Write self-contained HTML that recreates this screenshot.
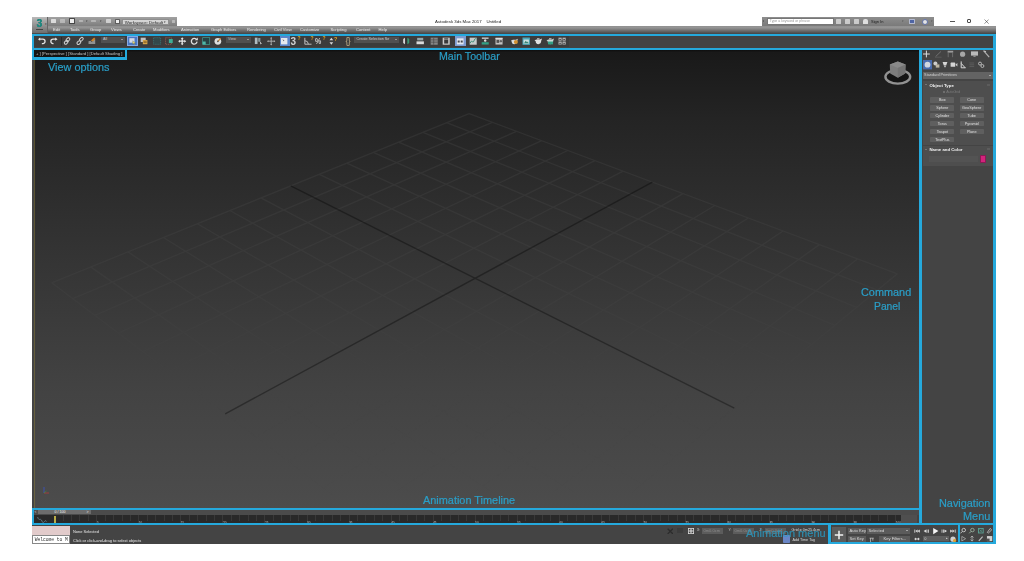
<!DOCTYPE html>
<html><head><meta charset="utf-8"><title>3ds Max 2017 interface</title>
<style>
*{box-sizing:border-box;margin:0;padding:0}
html,body{width:1024px;height:561px;background:#fff;overflow:hidden;font-family:"Liberation Sans",sans-serif}
#app{position:absolute;left:32px;top:17px;width:963.7px;height:526.5px;background:#444;overflow:hidden}
.abs{position:absolute}
/* title bar */
#title{position:absolute;left:0;top:0;width:964px;height:8.5px;background:#fff}
#qat{position:absolute;left:0;top:0;width:144.5px;height:8.5px;background:linear-gradient(#a2a2a2,#7d7d7d)}
#logo{position:absolute;left:0;top:0;width:15.5px;height:15.5px;background:linear-gradient(#b9b9b9,#6e6e6e);border-right:.5px solid #666;z-index:3}
#logo span{position:absolute;left:4.4px;top:.6px;font:bold 10.4px "Liberation Sans",sans-serif;color:#1d8f86;text-shadow:0 0 .6px #0e5a55}
#logo u{position:absolute;left:4px;top:11.6px;width:6.6px;height:1.8px;background:#333;display:block;opacity:.8}
.qi{position:absolute;top:1.6px;height:5px;background:#e9e9e9;border-radius:.6px;opacity:.85}
#ws{position:absolute;left:89.8px;top:1.5px;width:47.6px;height:6.3px;background:#d4d4d4;border:.4px solid #8e8e8e;font-size:4.4px;line-height:5.5px;color:#222;padding-left:2px;white-space:nowrap}
#ttext{position:absolute;left:403px;top:2px;font-size:4.35px;line-height:5px;color:#222;white-space:pre}
#search{position:absolute;left:729.8px;top:.4px;width:172.6px;height:8.4px;background:linear-gradient(#8d8d8d,#7a7a7a)}
#sbox{position:absolute;left:4.9px;top:1px;width:67.8px;height:6.2px;background:#fff;border:.4px solid #777;font-size:3.5px;line-height:5.6px;color:#999;padding-left:2px;white-space:nowrap}
#signin{position:absolute;left:109.2px;top:1.3px;font-size:4px;line-height:5.4px;color:#1c1c1c;white-space:nowrap}
.wc{position:absolute;top:0;font-size:7px;line-height:8.5px;color:#111}
/* menu bar */
#menu{position:absolute;left:0;top:8.8px;width:964px;height:8.2px;background:linear-gradient(#848484 0,#9a9a9a 10%,#8c8c8c 30%,#6c6c6c 60%,#4a4a4a 92%)}
#menu span{position:absolute;top:1.5px;font-size:4.1px;line-height:5px;color:#ececec;white-space:nowrap}
/* toolbar */
#tb{position:absolute;left:0;top:16.5px;width:964px;height:16.5px;background:#434343}
#tbin{position:absolute;left:2px;top:2.6px;width:535px;height:11.4px;background:#3c3c3c}
.ic{position:absolute;top:20.2px;width:8.4px;height:8.4px;margin-left:.8px;overflow:visible;opacity:.92}
.dd{position:absolute;top:20.1px;height:5.8px;background:#505050;font-size:3.7px;line-height:5.9px;overflow:hidden;color:#cfcfcf;padding-left:2.5px;white-space:nowrap}
.dd:after{content:"";position:absolute;right:2px;top:2.1px;border:1.1px solid transparent;border-top:1.5px solid #ddd}
#title,#menu,#icons,#cp,#st,#tl,#vlab,#logo{filter:blur(.32px)}
/* annotation boxes */
.cl{position:absolute;background:#25a9dc;z-index:20;display:block}
.lab{position:absolute;color:#2a9fc8;-webkit-text-stroke:.2px #2a9fc8;white-space:nowrap;z-index:21;font-family:"Liberation Sans",sans-serif;transform-origin:0 0}
/* viewport */
#vp{position:absolute;left:2px;top:33px;width:885px;height:458px;background:linear-gradient(#0e0e0e 0,#191919 .5%,#242424 15%,#343434 45%,#434343 75%,#4c4c4c 100%);overflow:hidden}
#vp svg{position:absolute;left:0;top:0}
#vlab{position:absolute;left:2px;top:33px;width:93px;height:8px;background:#131313;font-size:4.15px;line-height:8.6px;color:#c4c4c4;padding-left:2px;white-space:pre;z-index:5}
/* command panel */
#cp{position:absolute;left:889px;top:33px;width:75px;height:458px;background:#444}
#cp .roll{position:absolute;left:1.5px;width:70px;background:#4e4e4e}
#cp .hd{position:absolute;left:8.5px;font:bold 4.3px "Liberation Sans",sans-serif;color:#f2f2f2;white-space:nowrap;line-height:5px}
#cp .bt{position:absolute;width:24.2px;height:5.7px;overflow:hidden;background:#5f5f5f;font-size:3.75px;line-height:6.9px;color:#e2e2e2;text-align:center;border-radius:.4px}
/* timeline */
#tl{position:absolute;left:2px;top:493.3px;width:885px;height:12.5px;background:#444}
#tslider{position:absolute;left:0;top:0;width:885px;height:4.4px;background:#4b4b4b}
#tthumb{position:absolute;left:3.8px;top:.2px;width:53.2px;height:4px;background:#6c6c6c;font-size:3.6px;line-height:4px;color:#f4f4f4;padding-left:16.6px;white-space:nowrap}
#track{position:absolute;left:0;top:4.6px;width:866.8px;height:8.4px;background:#292929}
#track i{position:absolute;top:.4px;width:.5px;background:#383838;display:block}
#track b{position:absolute;top:6.9px;font:normal 3px "Liberation Sans",sans-serif;color:#c8c8c8;line-height:3.5px;z-index:25}
/* status */
#st{position:absolute;left:0;top:508px;width:964px;height:18.5px;background:#444}
.stx{position:absolute;font-size:3.95px;line-height:5px;color:#e8e8e8;white-space:nowrap}
.sb{position:absolute;background:#5b5b5b;font-size:4.05px;line-height:6.4px;overflow:hidden;color:#ddd;white-space:nowrap;padding-left:1.1px;height:5.8px}
</style></head><body>
<div id="app">
  <!-- title bar -->
  <div id="title">
    <div id="qat">
      <i class="qi" style="left:19.4px;width:4.8px;top:2px;height:4.4px"></i><i class="qi" style="left:28px;width:4.6px;top:2px;height:4.4px;opacity:.45"></i><i class="qi" style="left:37.4px;width:5.4px;top:1.4px;height:5.6px;background:#fff;border:.9px solid #3a3a3a"></i><i class="qi" style="left:46.8px;width:4.6px;opacity:.4;height:2.4px;top:3px"></i><i class="qi" style="left:59.4px;width:4.6px;opacity:.4;height:2.4px;top:3px"></i><i class="qi" style="left:74px;width:4.6px;top:2px;height:4.4px;opacity:.7"></i><i class="qi" style="left:82.6px;width:5px;top:1.8px;height:5px;background:#fff;border:.5px solid #555"></i>
      <span class="abs" style="left:53.6px;top:2.6px;font-size:2.6px;line-height:4px;color:#444">▾</span><span class="abs" style="left:67.6px;top:2.6px;font-size:2.6px;line-height:4px;color:#444">▾</span>
      <div id="ws">Workspace: Default<span style="position:absolute;right:2px;top:0;font-size:3px;color:#333">▾</span></div>
      <i class="qi" style="left:140.4px;width:2.6px;opacity:.45;height:2.6px;top:3px"></i>
    </div>
    <div id="ttext">Autodesk 3ds Max 2017    Untitled</div>
    <div id="search">
      <i class="abs" style="left:1.2px;top:2.6px;border:1.4px solid transparent;border-left:1.8px solid #444"></i>
      <div id="sbox">Type a keyword or phrase</div>
      <i class="qi" style="left:74.6px;width:4.6px;top:1.8px;height:4.4px;opacity:.7"></i><i class="qi" style="left:83.6px;width:4.6px;top:1.8px;height:4.4px;opacity:.7"></i><i class="qi" style="left:92.2px;width:4.6px;top:1.8px;height:4.4px;opacity:.7"></i>
      <i class="qi" style="left:101.4px;width:4.6px;top:1.6px;height:4.8px;opacity:.9;border-radius:2px 2px .6px .6px"></i>
      <div id="signin">Sign In</div>
      <span class="abs" style="left:140.6px;top:2px;font-size:3px;line-height:4px;color:#555">▾</span>
      <i class="qi" style="left:147.6px;width:5.4px;top:1.2px;height:5.8px;background:#4a62a8;border:.9px solid #b9c0d8;opacity:.9"></i>
      <i class="qi" style="left:160.4px;width:6px;top:1.2px;height:6px;border-radius:3px;background:#f4f4f4;border:1px solid #5a6fb0"></i>
      <span class="abs" style="left:168.8px;top:2px;font-size:3px;line-height:4px;color:#555">▾</span>
    </div>
    <i class="abs" style="left:918.2px;top:4px;width:5px;height:.6px;background:#555"></i>
    <span class="abs" style="left:935px;top:1.9px;width:4.4px;height:4.4px;border:.6px solid #4a4a4a;border-radius:1px"></span>
    <svg class="abs" style="left:951.8px;top:1.6px" width="5.2" height="5.2" viewBox="0 0 10 10"><path d="M1 1L9 9M9 1L1 9" stroke="#333" stroke-width="1.05"/></svg>
  </div>
  <div id="logo"><span>3</span><u></u></div>
  <span class="abs" style="left:13.2px;top:6px;font-size:3px;line-height:3px;color:#333;z-index:4">▾</span>
  <!-- menu -->
  <div id="menu"><span style="left:21px">Edit</span><span style="left:38px">Tools</span><span style="left:58px">Group</span><span style="left:79px">Views</span><span style="left:101px">Create</span><span style="left:121px">Modifiers</span><span style="left:149px">Animation</span><span style="left:179px">Graph Editors</span><span style="left:215px">Rendering</span><span style="left:242px">Civil View</span><span style="left:268px">Customize</span><span style="left:298.5px">Scripting</span><span style="left:324px">Content</span><span style="left:346.6px">Help</span></div>

  <!-- toolbar -->
  <div id="tb"><div id="tbin"></div></div>
  <div id="icons">
  <!-- undo / redo -->
  <svg class="ic" style="left:5px" viewBox="0 0 10 10"><path d="M1.2 2.6H5.8A2.6 2.6 0 0 1 5.8 7.8H4.6" fill="none" stroke="#f4f4f4" stroke-width="1.5"/><path d="M0 2.6L2.6 .6V4.6Z" fill="#f4f4f4"/></svg>
  <svg class="ic" style="left:17px" viewBox="0 0 10 10"><path d="M7.4 2.6H3.6A2.6 2.6 0 0 0 3.6 7.8H4.2" fill="none" stroke="#f4f4f4" stroke-width="1.5"/><path d="M9 2.6L6.2 .6V4.6Z" fill="#f4f4f4"/></svg>
  <i class="abs" style="left:28.5px;top:19.6px;width:.6px;height:9.4px;background:#2a2a2a"></i>
  <!-- link / unlink -->
  <svg class="ic" style="left:30.6px" viewBox="0 0 10 10"><g fill="none" stroke="#dcdcdc" stroke-width="1.2"><rect x="4.3" y=".6" width="3.2" height="5" rx="1.6" transform="rotate(45 5.9 3.1)"/><rect x="2.2" y="3.8" width="3.2" height="5" rx="1.6" transform="rotate(45 3.8 6.3)"/></g></svg>
  <svg class="ic" style="left:42.8px" viewBox="0 0 10 10"><g fill="none" stroke="#dcdcdc" stroke-width="1.2"><rect x="4.8" y=".2" width="3.2" height="5" rx="1.6" transform="rotate(45 6.4 2.7)"/><rect x="1.8" y="4.2" width="3.2" height="5" rx="1.6" transform="rotate(45 3.4 6.7)"/></g></svg>
  <!-- bind -->
  <svg class="ic" style="left:55px" viewBox="0 0 10 10"><path d="M.6 8.4V5.2L3 4.6 4.6 6 6.4 3.4 8.6 3V8.4Z" fill="#9a9a9a"/><path d="M3.4 4.2L7.4 .6 8.8 2.4 6 5.4Z" fill="#d98a2b"/></svg>
  <div class="dd" style="left:68.5px;width:24px">All</div>
  <!-- select object (active) -->
  <i class="abs" style="left:95px;top:19px;width:10.6px;height:10.2px;background:#4a78c4;border:.5px solid #86a8e2"></i>
  <svg class="ic" style="left:95.3px" viewBox="0 0 10 10"><rect x="1.6" y="1.4" width="6.2" height="5.4" fill="#dfe3ea"/><path d="M5.6 4.6L9 7 7.4 7.3 8.2 9 7.4 9.3 6.6 7.7 5.6 8.6Z" fill="#f6e26b" stroke="#444" stroke-width=".3"/></svg>
  <svg class="ic" style="left:107.6px" viewBox="0 0 10 10"><rect x=".8" y=".8" width="6" height="5.2" fill="#cfcfcf"/><rect x="3.4" y="3.6" width="5.4" height="5" fill="#e8b04b"/><rect x="4.2" y="4.6" width="3.8" height=".8" fill="#7a5a20"/><rect x="4.2" y="6.4" width="3.8" height=".8" fill="#7a5a20"/></svg>
  <svg class="ic" style="left:120px" viewBox="0 0 10 10"><rect x=".7" y=".9" width="8.4" height="7.8" fill="#334a4c" stroke="#3d8f8f" stroke-width=".7" stroke-dasharray="1.4 .8"/></svg>
  <svg class="ic" style="left:132px" viewBox="0 0 10 10"><rect x=".7" y=".9" width="7" height="7.8" fill="none" stroke="#c96b5b" stroke-width=".7" stroke-dasharray="1.4 .8"/><rect x="4.6" y="2.4" width="4.6" height="4.8" fill="#3fb79d"/></svg>
  <!-- move rotate scale place -->
  <svg class="ic" style="left:145px" viewBox="0 0 10 10"><path d="M5 .2L6.8 2.4H5.8V4.2H7.6V3.2L9.8 5 7.6 6.8V5.8H5.8V7.6H6.8L5 9.8 3.2 7.6H4.2V5.8H2.4V6.8L.2 5 2.4 3.2V4.2H4.2V2.4H3.2Z" fill="#f4f4f4"/></svg>
  <svg class="ic" style="left:157px" viewBox="0 0 10 10"><path d="M7.9 3.2A3.4 3.4 0 1 0 8.4 5.6" fill="none" stroke="#f0f0f0" stroke-width="1.6"/><path d="M5.8 3.8L9.4 3.8 9.2 .6Z" fill="#f0f0f0"/></svg>
  <svg class="ic" style="left:169px" viewBox="0 0 10 10"><rect x=".8" y=".8" width="8.4" height="8.2" fill="#274447" stroke="#43a79b" stroke-width=".8"/><rect x=".8" y="5.4" width="3.6" height="3.6" fill="#52c2b2"/></svg>
  <svg class="ic" style="left:181.5px" viewBox="0 0 10 10"><circle cx="4.6" cy="5.2" r="4" fill="#ececec"/><path d="M4.6 5.2L8 1.6" stroke="#d98a2b" stroke-width="1.3"/><circle cx="4.6" cy="5.2" r="1" fill="#555"/></svg>
  <div class="dd" style="left:193.5px;width:25px">View</div>
  <svg class="ic" style="left:221px" viewBox="0 0 10 10"><rect x="1" y=".8" width="3.2" height="7.6" fill="#b9c7cc"/><rect x="5" y="1.2" width="2.6" height="4.4" fill="#8fa3a8"/><path d="M6.8 5L9.4 8 8 8.2 8 9.6Z" fill="#eee"/></svg>
  <svg class="ic" style="left:234px" viewBox="0 0 10 10"><path d="M5 .8V9.2M.8 5H9.2" stroke="#b8b8b8" stroke-width="1.1"/><path d="M5 0L6.2 1.8H3.8ZM5 10L6.2 8.2H3.8ZM0 5L1.8 3.8V6.2ZM10 5L8.2 3.8V6.2Z" fill="#b8b8b8"/></svg>
  <i class="abs" style="left:247.5px;top:19.3px;width:10.4px;height:10px;background:#5d85c9"></i>
  <svg class="ic" style="left:247.7px" viewBox="0 0 10 10"><rect x="1.2" y="1.2" width="7.6" height="7.6" fill="#f2f2f2"/><path d="M3 2.6L5.4 4.4 4.2 4.6 4.6 5.8Z" fill="#333"/></svg>
  <!-- snaps -->
  <span class="abs" style="left:258.6px;top:18.8px;font:bold 10px 'Liberation Sans',sans-serif;line-height:11px;color:#d2d2d2">3</span>
  <span class="abs" style="left:265.5px;top:18.6px;font:bold 5px 'Liberation Sans',sans-serif;line-height:5px;color:#e5a623">?</span>
  <svg class="ic" style="left:271.6px" viewBox="0 0 10 10"><path d="M1 1V8.6H9M1 4.4A4.4 4.4 0 0 1 5.2 8.6" fill="none" stroke="#cfcfcf" stroke-width="1.1"/></svg>
  <span class="abs" style="left:278.6px;top:18.6px;font:bold 5px 'Liberation Sans',sans-serif;line-height:5px;color:#e5a623">?</span>
  <span class="abs" style="left:283.4px;top:19.4px;font:bold 8.6px 'Liberation Sans',sans-serif;line-height:10px;color:#cfcfcf;transform:scaleX(.82);transform-origin:0 0">%</span>
  <span class="abs" style="left:290.6px;top:18.6px;font:bold 5px 'Liberation Sans',sans-serif;line-height:5px;color:#e5a623">?</span>
  <svg class="ic" style="left:296.6px" viewBox="0 0 10 10"><path d="M2.8 .8L5 3.8H.6ZM2.8 9.2L5 6.2H.6Z" fill="#e8e8e8"/></svg>
  <span class="abs" style="left:302px;top:18.6px;font:bold 5.4px 'Liberation Sans',sans-serif;line-height:6px;color:#e5a623">?</span>
  <span class="abs" style="left:313.6px;top:18.6px;font:normal 8.6px 'Liberation Sans',sans-serif;line-height:10px;color:#c9b68d;letter-spacing:-.6px">{}</span>
  <div class="dd" style="left:322px;width:45px">Create Selection Se</div>
  <!-- mirror / align / layers -->
  <svg class="ic" style="left:369.6px" viewBox="0 0 10 10"><path d="M1.4 2.4L3.6 1V8.6L1.4 7.2Z" fill="#e4e4e4"/><path d="M8.6 2.4L6.4 1V8.6L8.6 7.2Z" fill="#3fa27a"/><path d="M5 0V10" stroke="#222" stroke-width=".6"/></svg>
  <svg class="ic" style="left:383.6px" viewBox="0 0 10 10"><rect x="1.4" y="1" width="7.2" height="3" fill="#9db0b5"/><rect x=".6" y="5.2" width="8.8" height="3.4" fill="#e9e9e9"/></svg>
  <svg class="ic" style="left:397px" viewBox="0 0 10 10"><rect x=".8" y=".8" width="8.4" height="8.4" fill="#8e8e8e"/><path d="M.8 3.4H9.2M.8 6.2H9.2M4.4 .8V9.2" stroke="#444" stroke-width=".7"/></svg>
  <svg class="ic" style="left:409px" viewBox="0 0 10 10"><rect x=".8" y=".8" width="8.4" height="8.4" fill="#d8d8d8"/><rect x="2.6" y="3" width="4.8" height="4.8" fill="#3a3a3a"/><rect x="2.6" y="1.6" width="4.8" height=".9" fill="#3a3a3a"/></svg>
  <i class="abs" style="left:423px;top:19px;width:10.6px;height:10.4px;background:#7f9ccf"></i>
  <svg class="ic" style="left:423.3px" viewBox="0 0 10 10"><rect x="1" y="1.6" width="8" height="7.2" fill="#eef1f6"/><rect x="2" y="4.2" width="2.4" height="2.4" fill="#444"/><rect x="5.6" y="4.2" width="2.4" height="2.4" fill="#444"/></svg>
  <svg class="ic" style="left:436px" viewBox="0 0 10 10"><rect x=".8" y=".8" width="8.4" height="8.4" fill="#d4d8d8"/><path d="M1.4 7.4C3 2 4.6 8.6 6 4.4S8 3 8.8 2.2" fill="none" stroke="#2f8d72" stroke-width="1.1"/></svg>
  <svg class="ic" style="left:448px" viewBox="0 0 10 10"><rect x="1" y=".6" width="8" height="1.6" fill="#dcdcdc"/><path d="M5 2.2V6" stroke="#dcdcdc" stroke-width="1"/><rect x=".8" y="6.2" width="8.4" height="2.8" fill="#35a88b"/><rect x="3.6" y="3.4" width="2.8" height="1.8" fill="#eee"/></svg>
  <svg class="ic" style="left:462px" viewBox="0 0 10 10"><rect x=".6" y="1" width="8.4" height="8" fill="#cfcfcf"/><rect x="1.8" y="3.4" width="3.2" height="3.6" fill="#555"/><circle cx="7" cy="5" r="1.4" fill="#666"/><rect x=".6" y="1" width="8.4" height="1.2" fill="#f2f2f2"/></svg>
  <svg class="ic" style="left:477px" viewBox="0 0 10 10"><path d="M1 4.4L3.4 3.2H7L9.4 2 8.6 4.6C8.6 7 7.4 8.6 5.2 8.6S2 7.2 2 5.4Z" fill="#e8e8e8"/><circle cx="7" cy="6" r="2.4" fill="#e09a32"/></svg>
  <svg class="ic" style="left:489px" viewBox="0 0 10 10"><rect x=".6" y=".6" width="8.8" height="8.8" fill="#4fb1c4"/><rect x="1.8" y="3" width="6.4" height="5" fill="#d9eef0"/><path d="M2.4 7.4L4.4 4.6 6 6.4 7 5.4 7.8 7.4Z" fill="#3a8f7a"/></svg>
  <svg class="ic" style="left:501.6px" viewBox="0 0 10 10"><path d="M.6 3.8L3 3H7L9.6 1.8 8.6 4.6C8.6 7 7.4 8.6 5.2 8.6S2 7.2 2 5.2Z" fill="#f0f0f0"/><rect x="3.6" y="1.6" width="3" height="1.2" fill="#f0f0f0"/></svg>
  <svg class="ic" style="left:513px" viewBox="0 0 10 10"><path d="M.6 3.8L3 3H7L9.6 1.8 8.6 4.6C8.6 7 7.4 8.6 5.2 8.6S2 7.2 2 5.2Z" fill="#d8e6e4"/><rect x="2.4" y="5.4" width="6" height="3.4" fill="#35a88b"/><rect x="3.6" y="1.6" width="3" height="1.2" fill="#eee"/></svg>
  <svg class="ic" style="left:525px" viewBox="0 0 10 10"><g fill="#bdbdbd"><rect x=".6" y=".8" width="3.8" height="3.6"/><rect x="5.4" y=".8" width="3.8" height="3.6"/><rect x=".6" y="5.4" width="3.8" height="3.6"/><rect x="5.4" y="5.4" width="3.8" height="3.6"/></g><g fill="#444"><rect x="1.6" y="2.4" width="1.8" height="1.2"/><rect x="6.4" y="2.4" width="1.8" height="1.2"/><rect x="1.6" y="7" width="1.8" height="1.2"/><rect x="6.4" y="7" width="1.8" height="1.2"/></g></svg>
  </div>

  <!-- viewport -->
  <div id="vp">
    <svg width="885" height="458" viewBox="0 0 885 458">
      <defs><linearGradient id="fd" gradientUnits="userSpaceOnUse" x1="0" y1="0" x2="0" y2="458"><stop offset="0" stop-color="#fff"/><stop offset=".5" stop-color="#fff"/><stop offset=".7" stop-color="#999"/><stop offset=".85" stop-color="#222"/><stop offset="1" stop-color="#000"/></linearGradient><mask id="mk" maskUnits="userSpaceOnUse" x="0" y="0" width="885" height="458"><rect width="885" height="458" fill="url(#fd)"/></mask></defs>
      <g stroke="#444" stroke-width="1.3" opacity=".38" mask="url(#mk)">
<line x1="435.1" y1="63.6" x2="17.7" y2="232.8"/>
<line x1="435.1" y1="63.6" x2="863.4" y2="223.8"/>
<line x1="458.4" y1="72.3" x2="38.8" y2="248.7"/>
<line x1="412.5" y1="72.7" x2="843.6" y2="240.1"/>
<line x1="482.6" y1="81.3" x2="61.0" y2="265.4"/>
<line x1="388.9" y1="82.3" x2="822.8" y2="257.3"/>
<line x1="507.7" y1="90.7" x2="84.3" y2="283.1"/>
<line x1="364.5" y1="92.2" x2="800.8" y2="275.4"/>
<line x1="533.8" y1="100.5" x2="108.9" y2="301.6"/>
<line x1="339.2" y1="102.4" x2="777.7" y2="294.4"/>
<line x1="560.9" y1="110.6" x2="134.8" y2="321.2"/>
<line x1="312.8" y1="113.1" x2="753.3" y2="314.5"/>
<line x1="589.1" y1="121.1" x2="162.2" y2="341.9"/>
<line x1="285.3" y1="124.3" x2="727.6" y2="335.7"/>
<line x1="649.0" y1="143.6" x2="221.9" y2="387.0"/>
<line x1="226.9" y1="147.9" x2="671.4" y2="382.0"/>
<line x1="680.9" y1="155.5" x2="254.6" y2="411.6"/>
<line x1="195.8" y1="160.5" x2="640.7" y2="407.3"/>
<line x1="714.2" y1="168.0" x2="289.3" y2="437.8"/>
<line x1="163.4" y1="173.7" x2="608.0" y2="434.2"/>
<line x1="749.0" y1="181.0" x2="326.2" y2="465.7"/>
<line x1="129.4" y1="187.5" x2="573.1" y2="462.9"/>
<line x1="785.4" y1="194.6" x2="365.7" y2="495.5"/>
<line x1="93.9" y1="201.9" x2="535.9" y2="493.5"/>
<line x1="823.5" y1="208.9" x2="407.9" y2="527.4"/>
<line x1="56.7" y1="216.9" x2="496.1" y2="526.4"/>
<line x1="863.4" y1="223.8" x2="453.3" y2="561.6"/>
<line x1="17.7" y1="232.8" x2="453.3" y2="561.6"/>
      </g>
      <g stroke="#000" stroke-width="1.4" opacity=".34">
<line x1="256.7" y1="135.9" x2="700.3" y2="358.2"/>
<line x1="618.4" y1="132.1" x2="191.2" y2="363.8"/>
      </g>
      <!-- viewcube -->
      <ellipse cx="863.8" cy="26.8" rx="12.4" ry="6.8" fill="#151515" stroke="#9c9c9c" stroke-width="2.4" opacity=".92"/>
      <path d="M863.8 11.6L871.6 14.6 871.2 23.6 863.8 27.8 856.2 23.6 855.8 14.6Z" fill="#7e7e7e"/>
      <path d="M863.8 11.6L871.6 14.6 863.8 18 855.8 14.6Z" fill="#8a8a8a"/>
      <path d="M863.8 18V27.8L871.2 23.6 871.6 14.6Z" fill="#747474"/>
      <!-- axis tripod -->
      <path d="M10 443V437" stroke="#3a53c8" stroke-width=".8"/><path d="M10 443H15" stroke="#b53a3a" stroke-width=".8"/><path d="M10 443L12.4 441" stroke="#3a9a3a" stroke-width=".6"/>
    </svg>
    <i class="abs" style="left:0;top:0;width:.9px;height:458px;background:#8a7b3a;opacity:.5"></i>
  </div>
  <div id="vlab">+ ] [Perspective ] [Standard ] [Default Shading ]</div>

  <!-- command panel -->
  <div id="cp">
    <div id="cpicons"></div>
    <!-- tabs row -->
    <svg class="abs" style="left:0;top:0;opacity:.88" width="75" height="40" viewBox="0 0 75 40">
      <path d="M5.4 .6V7.4M2 4H8.8" stroke="#f2f2f2" stroke-width="1"/>
      <path d="M14.6 6.6L20 1.4" stroke="#7c7c7c" stroke-width=".9"/><path d="M14 7.2H20.6" stroke="#6c6c6c" stroke-width=".6"/>
      <rect x="26.6" y=".8" width="5.6" height="1.8" fill="#a8a8a8"/><path d="M27.2 2.6V7.2M31.6 2.6V7.2" stroke="#7c7c7c" stroke-width=".8"/>
      <circle cx="41.6" cy="4.2" r="2.6" fill="#b4b4b4"/>
      <rect x="50" y="1.4" width="7" height="4.2" fill="#cacaca"/><rect x="52.4" y="5.6" width="2.2" height="1.2" fill="#aaa"/>
      <path d="M63.2 1.4L68.2 7.2" stroke="#bdbdbd" stroke-width="1.2"/><path d="M62.4 .9L65 1.7" stroke="#d4d4d4" stroke-width="1.1"/>
      <!-- row 2 -->
      <rect x="2" y="10" width="9" height="9.4" fill="#4a72be"/>
      <circle cx="6.5" cy="14.7" r="2.9" fill="#e6ecf6"/>
      <circle cx="14.4" cy="13.6" r="2" fill="#e0e0e0"/><rect x="14.8" y="14.4" width="3.6" height="3.2" fill="#cfc7b3"/>
      <path d="M21.6 12H26.4L25.2 15.6H22.8Z" fill="#ececec"/><rect x="23.2" y="15.8" width="1.6" height="1.4" fill="#d6d6d6"/>
      <rect x="29.6" y="12.6" width="4.6" height="4.2" rx=".6" fill="#e8e8e8"/><path d="M34.4 14.7L36.4 13V16.4Z" fill="#e8e8e8"/>
      <path d="M40.2 11.4V17.8H44.6M40.2 13.4L44.2 17.8" fill="none" stroke="#ececec" stroke-width="1"/>
      <path d="M48.4 13H53.2M48.4 14.8H53.2M48.4 16.6H53.2" stroke="#666" stroke-width=".8"/>
      <circle cx="59" cy="13.6" r="1.5" fill="none" stroke="#cfcfcf" stroke-width=".9"/><circle cx="61.4" cy="16" r="1.5" fill="none" stroke="#cfcfcf" stroke-width=".9"/>
    </svg>
    <div class="abs" style="left:1.5px;top:22.2px;width:70px;height:6.6px;background:#636363;font-size:3.8px;line-height:6.4px;color:#d2d2d2;padding-left:1.6px;white-space:nowrap">Standard Primitives<i class="abs" style="right:1.6px;top:2.4px;border:1.2px solid transparent;border-top:1.6px solid #f0f0f0"></i></div>
    <div class="roll" style="top:31px;height:63.6px"></div>
    <i class="abs" style="left:4.4px;top:34.4px;border:1px solid transparent;border-top:1.4px solid #999"></i>
    <div class="hd" style="top:32.6px">Object Type</div>
    <i class="abs" style="left:65.5px;top:33.6px;width:3.4px;height:2.4px;background:#5c5c5c"></i>
    <div class="abs" style="left:21.6px;top:40.4px;font-size:3.6px;line-height:5px;color:#7d7d7d;white-space:nowrap"><i style="display:inline-block;width:2.4px;height:2.4px;border:.4px solid #6e6e6e;margin-right:1.2px"></i>AutoGrid</div>
    <div class="bt" style="left:9.2px;top:47.0px">Box</div><div class="bt" style="left:38.6px;top:47.0px">Cone</div>
    <div class="bt" style="left:9.2px;top:55.0px">Sphere</div><div class="bt" style="left:38.6px;top:55.0px">GeoSphere</div>
    <div class="bt" style="left:9.2px;top:62.8px">Cylinder</div><div class="bt" style="left:38.6px;top:62.8px">Tube</div>
    <div class="bt" style="left:9.2px;top:70.6px">Torus</div><div class="bt" style="left:38.6px;top:70.6px">Pyramid</div>
    <div class="bt" style="left:9.2px;top:78.6px">Teapot</div><div class="bt" style="left:38.6px;top:78.6px">Plane</div>
    <div class="bt" style="left:9.2px;top:86.6px">TextPlus</div>
    <div class="roll" style="top:95.6px;height:20px"></div>
    <i class="abs" style="left:4.4px;top:98.6px;border:1px solid transparent;border-top:1.4px solid #999"></i>
    <div class="hd" style="top:96.8px">Name and Color</div>
    <i class="abs" style="left:65.5px;top:97.8px;width:3.4px;height:2.4px;background:#5c5c5c"></i>
    <div class="abs" style="left:8.4px;top:106px;width:48.4px;height:6.4px;background:#535353"></div>
    <div class="abs" style="left:58.5px;top:105.2px;width:6.2px;height:7.8px;background:#d3237c;border:.5px solid #8a1a55"></div>
  </div>

  <!-- timeline -->
  <div id="tl">
    <div id="tslider"><span class="abs" style="left:.6px;top:.2px;font-size:3.4px;line-height:4px;color:#ddd">&lt;</span><div id="tthumb">0 / 100</div><span class="abs" style="left:52.4px;top:.2px;font-size:3.4px;line-height:4px;color:#eee;z-index:2">&gt;</span></div>
    <div class="abs" style="left:866.8px;top:4.6px;width:16.4px;height:8.4px;background:#4f4f4f"></div>
    <div id="track"><i style="left:28.6px;height:5.4px"></i><i style="left:37.0px;height:5.4px"></i><i style="left:45.4px;height:5.4px"></i><i style="left:53.8px;height:5.4px"></i><i style="left:62.2px;height:7.6px"></i><i style="left:70.7px;height:5.4px"></i><i style="left:79.1px;height:5.4px"></i><i style="left:87.5px;height:5.4px"></i><i style="left:95.9px;height:5.4px"></i><i style="left:104.3px;height:7.6px"></i><i style="left:112.7px;height:5.4px"></i><i style="left:121.1px;height:5.4px"></i><i style="left:129.5px;height:5.4px"></i><i style="left:137.9px;height:5.4px"></i><i style="left:146.3px;height:7.6px"></i><i style="left:154.8px;height:5.4px"></i><i style="left:163.2px;height:5.4px"></i><i style="left:171.6px;height:5.4px"></i><i style="left:180.0px;height:5.4px"></i><i style="left:188.4px;height:7.6px"></i><i style="left:196.8px;height:5.4px"></i><i style="left:205.2px;height:5.4px"></i><i style="left:213.6px;height:5.4px"></i><i style="left:222.0px;height:5.4px"></i><i style="left:230.4px;height:7.6px"></i><i style="left:238.9px;height:5.4px"></i><i style="left:247.3px;height:5.4px"></i><i style="left:255.7px;height:5.4px"></i><i style="left:264.1px;height:5.4px"></i><i style="left:272.5px;height:7.6px"></i><i style="left:280.9px;height:5.4px"></i><i style="left:289.3px;height:5.4px"></i><i style="left:297.7px;height:5.4px"></i><i style="left:306.1px;height:5.4px"></i><i style="left:314.6px;height:7.6px"></i><i style="left:323.0px;height:5.4px"></i><i style="left:331.4px;height:5.4px"></i><i style="left:339.8px;height:5.4px"></i><i style="left:348.2px;height:5.4px"></i><i style="left:356.6px;height:7.6px"></i><i style="left:365.0px;height:5.4px"></i><i style="left:373.4px;height:5.4px"></i><i style="left:381.8px;height:5.4px"></i><i style="left:390.2px;height:5.4px"></i><i style="left:398.6px;height:7.6px"></i><i style="left:407.1px;height:5.4px"></i><i style="left:415.5px;height:5.4px"></i><i style="left:423.9px;height:5.4px"></i><i style="left:432.3px;height:5.4px"></i><i style="left:440.7px;height:7.6px"></i><i style="left:449.1px;height:5.4px"></i><i style="left:457.5px;height:5.4px"></i><i style="left:465.9px;height:5.4px"></i><i style="left:474.3px;height:5.4px"></i><i style="left:482.8px;height:7.6px"></i><i style="left:491.2px;height:5.4px"></i><i style="left:499.6px;height:5.4px"></i><i style="left:508.0px;height:5.4px"></i><i style="left:516.4px;height:5.4px"></i><i style="left:524.8px;height:7.6px"></i><i style="left:533.2px;height:5.4px"></i><i style="left:541.6px;height:5.4px"></i><i style="left:550.0px;height:5.4px"></i><i style="left:558.4px;height:5.4px"></i><i style="left:566.9px;height:7.6px"></i><i style="left:575.3px;height:5.4px"></i><i style="left:583.7px;height:5.4px"></i><i style="left:592.1px;height:5.4px"></i><i style="left:600.5px;height:5.4px"></i><i style="left:608.9px;height:7.6px"></i><i style="left:617.3px;height:5.4px"></i><i style="left:625.7px;height:5.4px"></i><i style="left:634.1px;height:5.4px"></i><i style="left:642.5px;height:5.4px"></i><i style="left:651.0px;height:7.6px"></i><i style="left:659.4px;height:5.4px"></i><i style="left:667.8px;height:5.4px"></i><i style="left:676.2px;height:5.4px"></i><i style="left:684.6px;height:5.4px"></i><i style="left:693.0px;height:7.6px"></i><i style="left:701.4px;height:5.4px"></i><i style="left:709.8px;height:5.4px"></i><i style="left:718.2px;height:5.4px"></i><i style="left:726.6px;height:5.4px"></i><i style="left:735.1px;height:7.6px"></i><i style="left:743.5px;height:5.4px"></i><i style="left:751.9px;height:5.4px"></i><i style="left:760.3px;height:5.4px"></i><i style="left:768.7px;height:5.4px"></i><i style="left:777.1px;height:7.6px"></i><i style="left:785.5px;height:5.4px"></i><i style="left:793.9px;height:5.4px"></i><i style="left:802.3px;height:5.4px"></i><i style="left:810.7px;height:5.4px"></i><i style="left:819.2px;height:7.6px"></i><i style="left:827.6px;height:5.4px"></i><i style="left:836.0px;height:5.4px"></i><i style="left:844.4px;height:5.4px"></i><i style="left:852.8px;height:5.4px"></i><i style="left:861.2px;height:7.6px"></i><b style="left:62.9px">5</b><b style="left:104.9px">10</b><b style="left:146.9px">15</b><b style="left:189.0px">20</b><b style="left:231.0px">25</b><b style="left:273.1px">30</b><b style="left:315.2px">35</b><b style="left:357.2px">40</b><b style="left:399.2px">45</b><b style="left:441.3px">50</b><b style="left:483.4px">55</b><b style="left:525.4px">60</b><b style="left:567.5px">65</b><b style="left:609.5px">70</b><b style="left:651.6px">75</b><b style="left:693.6px">80</b><b style="left:735.7px">85</b><b style="left:777.7px">90</b><b style="left:819.8px">95</b><b style="left:861.8px">100</b><i style="left:19.5px;top:1.6px;width:2.2px;height:6.8px;background:#b9ad48"></i>
    <svg class="abs" style="left:3px;top:1.4px" width="12" height="6.4" viewBox="0 0 12 6.4"><path d="M.6 1C2 6 3.4 1 5 5.2S8 2.4 9.6 5.6" fill="none" stroke="#7a98a6" stroke-width=".8" opacity=".8"/></svg></div>
  </div>

  <!-- status -->
  <div id="st">
    <div class="abs" style="left:.4px;top:1.4px;width:37.6px;height:8.4px;background:#e2cbcb"></div>
    <div class="abs" style="left:.4px;top:9.8px;width:37.6px;height:8.8px;background:#fff;border:.4px solid #888;font:4.6px 'Liberation Mono',monospace;line-height:7.6px;color:#2a2a2a;padding-left:1.4px;white-space:nowrap;overflow:hidden">Welcome to M</div>
    <div class="stx" style="left:41px;top:3.6px">None Selected</div>
    <div class="stx" style="left:41px;top:13.2px">Click or click-and-drag to select objects</div>
    <!-- coords -->
    <svg class="abs" style="left:634.6px;top:2.6px" width="6.6" height="6.6" viewBox="0 0 10 10"><path d="M1 1L9 9M9 1L1 9" stroke="#2c2c2c" stroke-width="2"/></svg>
    <i class="abs" style="left:644.6px;top:3.4px;width:6px;height:4.4px;background:#3c3c3c"></i>
    <svg class="abs" style="left:656px;top:2.6px" width="6" height="6" viewBox="0 0 10 10"><rect x=".6" y=".6" width="8.8" height="8.8" fill="none" stroke="#ddd" stroke-width="1.4"/><path d="M5 1.6V8.4M1.6 5H8.4" stroke="#ddd" stroke-width="1.8"/></svg>
    <span class="stx" style="left:665px;top:3.3px;font-size:3.4px;color:#ccc">X:</span><div class="sb" style="left:670.3px;top:3px;width:20.6px;color:#8a8a8a;background:#5c5c5c">0m0.0cm</div>
    <span class="stx" style="left:696.4px;top:3.3px;font-size:3.4px;color:#ccc">Y:</span><div class="sb" style="left:701.4px;top:3px;width:20.6px;color:#8a8a8a;background:#5c5c5c">0m0.0cm</div>
    <span class="stx" style="left:727.4px;top:3.3px;font-size:3.4px;color:#ccc">Z:</span><div class="sb" style="left:732.6px;top:3px;width:21.4px;color:#8a8a8a;background:#5c5c5c">0m0.0cm</div>
    <span class="stx" style="left:759.6px;top:3.4px;font-size:3.7px;color:#ddd">Grid = 0m25.4cm</span>
    <i class="abs" style="left:751px;top:10.4px;width:7.2px;height:7.6px;background:#6a86c6;border-radius:.8px"></i>
    <span class="stx" style="left:760.6px;top:12.8px;font-size:3.7px;color:#ddd">Add Time Tag</span>
    <!-- anim controls -->
    <div class="abs" style="left:800.2px;top:1.8px;width:14.2px;height:15.8px;background:#5c5c5c"></div>
    <svg class="abs" style="left:802.2px;top:4.6px" width="10" height="10" viewBox="0 0 10 10"><path d="M5 .8V9.2M.8 5H9.2" stroke="#f2f2f2" stroke-width="1.5"/></svg>
    <div class="sb" style="left:816.4px;top:3px;width:17.4px;height:6px">Auto Key</div>
    <div class="sb" style="left:835.4px;top:3px;width:42.4px;height:6px">Selected<i class="abs" style="right:2px;top:2.2px;border:1.1px solid transparent;border-top:1.5px solid #eee"></i></div>
    <div class="sb" style="left:816.4px;top:11.4px;width:17.4px;height:6px">Set Key</div>
    <svg class="abs" style="left:837px;top:11.6px" width="6" height="6" viewBox="0 0 10 10"><path d="M1 2H8M2.6 2V9M6.4 2V6" stroke="#d6d6d6" stroke-width="1.1" fill="none"/></svg>
    <div class="sb" style="left:846.6px;top:11.4px;width:31.2px;height:6px;padding-left:5px">Key Filters...</div>
    <!-- playback -->
    <svg class="abs" style="left:880px;top:2.4px" width="46" height="16" viewBox="0 0 46 16">
      <g fill="#dcdcdc">
      <path d="M2.4 2.4V5.8H3.2V2.4ZM5.6 2.4V5.8L3.4 4.1ZM7.8 2.4V5.8L5.6 4.1Z"/>
      <path d="M14.6 2.4V5.8H15.4V2.4ZM16.2 2.4V5.8H17V2.4ZM14.2 2.4V5.8L11.6 4.1Z"/>
      <path d="M21.2 1V7.2L26.4 4.1Z" fill="#f4f4f4"/>
      <path d="M29.6 2.4V5.8H30.4V2.4ZM31.2 2.4V5.8H32V2.4ZM32.4 2.4V5.8L35 4.1Z"/>
      <path d="M43.6 2.4V5.8H42.8V2.4ZM40.4 2.4V5.8L42.6 4.1ZM38.2 2.4V5.8L40.4 4.1Z"/>
      <path d="M2.2 12L4 10.6V11.5H6V10.6L7.8 12 6 13.4V12.5H4V13.4Z"/>
      </g>
      <rect x="11" y="9" width="26" height="5.4" fill="#5e5e5e"/>
      <circle cx="41" cy="12.2" r="2.6" fill="#cfcfcf"/><circle cx="42.6" cy="13.6" r="1.6" fill="#e0a030"/>
    </svg>
    <span class="stx" style="left:892.6px;top:11.8px;font-size:3.4px;color:#ddd">0</span>
    <span class="abs" style="left:914px;top:11.4px;font-size:3px;line-height:5px;color:#ddd">▴</span>
    <!-- nav icons -->
    <svg class="abs" style="left:927.4px;top:1.9px;opacity:.82" width="34" height="15.4" viewBox="0 0 36 17" preserveAspectRatio="none">
      <g fill="none" stroke="#e6e6e6" stroke-width="1">
      <circle cx="5" cy="3.4" r="1.9"/><path d="M3.6 4.8L1.6 7"/>
      <circle cx="14.2" cy="3.4" r="1.9" stroke="#a9c4b0"/><path d="M12.8 4.8L10.8 7" stroke="#a9c4b0"/>
      <rect x="20.6" y="1.6" width="5" height="5" stroke="#5fb7a6"/><path d="M21.6 2.6L24.6 5.6M24.6 2.6L21.6 5.6" stroke="#5fb7a6" stroke-width=".7"/>
      <path d="M30 6L33 1.6 34.6 3.2 31.2 6.6Z" stroke="#ddd" stroke-width=".9"/>
      <path d="M3 10.4V15.4L7 12.9Z" stroke="#ccc" stroke-width=".8"/>
      <path d="M13.8 10V15.4M12.2 11.6L13.8 10 15.4 11.6M12.2 14L13.8 15.6 15.4 14" stroke="#ddd" stroke-width=".8"/>
      <path d="M21 15.4L25 10.6" stroke="#d8d8d8" stroke-width="1.2"/>
      </g>
      <rect x="29.6" y="10" width="5.6" height="5.6" fill="#f0f0f0"/><rect x="29.6" y="12.8" width="2.8" height="2.8" fill="#555"/>
    </svg>
  </div>

  <!-- annotation boxes -->
  <i class="cl" style="left:0.0px;top:16.7px;width:964.0px;height:2.5px"></i>
  <i class="cl" style="left:0.0px;top:30.6px;width:964.0px;height:2.5px"></i>
  <i class="cl" style="left:0.0px;top:16.7px;width:2.4px;height:26.1px"></i>
  <i class="cl" style="left:961.3px;top:16.7px;width:2.7px;height:510.3px"></i>
  <i class="cl" style="left:0.0px;top:40.4px;width:95.2px;height:2.4px"></i>
  <i class="cl" style="left:92.7px;top:30.6px;width:2.5px;height:12.2px"></i>
  <i class="cl" style="left:887.2px;top:30.6px;width:2.7px;height:477.6px"></i>
  <i class="cl" style="left:0.0px;top:490.5px;width:889.9px;height:2.5px"></i>
  <i class="cl" style="left:0.0px;top:505.7px;width:964.0px;height:2.6px"></i>
  <i class="cl" style="left:0.0px;top:490.5px;width:2.4px;height:17.8px"></i>
  <i class="cl" style="left:796.1px;top:505.7px;width:2.5px;height:21.3px"></i>
  <i class="cl" style="left:925.7px;top:505.7px;width:2.5px;height:21.3px"></i>
  <i class="cl" style="left:796.1px;top:524.5px;width:167.9px;height:2.5px"></i>
  <!-- labels -->
  <div class="lab" style="left:16.3px;top:44.10px;font-size:11.7px;line-height:11.7px;transform:scaleX(0.931);opacity:1">View options</div>
  <div class="lab" style="left:406.7px;top:34.47px;font-size:11.5px;line-height:11.5px;transform:scaleX(0.925);opacity:1">Main Toolbar</div>
  <div class="lab" style="left:829.4px;top:269.54px;font-size:10.7px;line-height:10.7px;transform:scaleX(1.018);opacity:1">Command</div>
  <div class="lab" style="left:841.5px;top:283.94px;font-size:10.7px;line-height:10.7px;transform:scaleX(0.965);opacity:1">Panel</div>
  <div class="lab" style="left:906.6px;top:480.79px;font-size:11px;line-height:11px;transform:scaleX(0.989);opacity:1">Navigation</div>
  <div class="lab" style="left:930.7px;top:493.69px;font-size:11px;line-height:11px;transform:scaleX(0.992);opacity:1">Menu</div>
  <div class="lab" style="left:390.8px;top:478.36px;font-size:10.8px;line-height:10.8px;transform:scaleX(1.010);opacity:1">Animation Timeline</div>
  <div class="lab" style="left:713.8px;top:511.47px;font-size:11.5px;line-height:11.5px;transform:scaleX(0.959);opacity:0.8">Animation menu</div>
</div>
</body></html>
